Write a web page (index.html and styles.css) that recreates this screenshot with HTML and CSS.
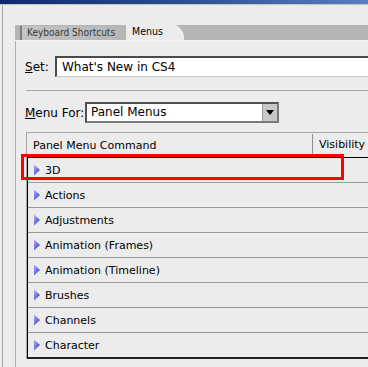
FILE: index.html
```html
<!DOCTYPE html>
<html lang="en">
<head>
    <meta charset="UTF-8">
    <title>Keyboard Shortcuts and Menus</title>
    <link rel="stylesheet" href="styles.css">
</head>
<body>
    <div class="titlebar"></div>
    <div class="window">
        <div class="tabs">
            <div class="tab">Keyboard Shortcuts</div>
            <div class="tab active">Menus</div>
        </div>
        <div class="panel">
            <div class="field-row set-row">
                <span class="label"><u>S</u>et:</span>
                <div class="textbox">What's New in CS4</div>
            </div>
            <div class="divider"></div>
            <div class="field-row menu-row">
                <span class="label"><u>M</u>enu For:</span>
                <div class="select">
                    <span class="select-value">Panel Menus</span>
                    <span class="select-button"><span class="arrow"></span></span>
                </div>
            </div>
            <div class="table">
                <div class="table-head">
                    <div class="col-command">Panel Menu Command</div>
                    <div class="col-visibility">Visibility</div>
                </div>
                <div class="table-body">
                    <div class="row highlighted"><span class="twisty"></span>3D</div>
                    <div class="row"><span class="twisty"></span>Actions</div>
                    <div class="row"><span class="twisty"></span>Adjustments</div>
                    <div class="row"><span class="twisty"></span>Animation (Frames)</div>
                    <div class="row"><span class="twisty"></span>Animation (Timeline)</div>
                    <div class="row"><span class="twisty"></span>Brushes</div>
                    <div class="row"><span class="twisty"></span>Channels</div>
                    <div class="row"><span class="twisty"></span>Character</div>
                </div>
            </div>
        </div>
    </div>
</body>
</html>
```

FILE: styles.css
```css
* {
    margin: 0;
    padding: 0;
    box-sizing: border-box;
}

body {
    background: #ececec;
    font-family: Tahoma, 'DejaVu Sans', sans-serif;
    font-size: 11px;
    color: #000;
    width: 368px;
    height: 367px;
    overflow: hidden;
}

/* barra azul da janela */
.titlebar {
    height: 5px;
    background: linear-gradient(90deg, #0a2a6e, #2a4f96 50%, #5a7fbf);
    border-bottom: 1px solid #c4c4c4;
}

.window {
    margin-left: 2px;
    border-left: 1px solid #a8a8a8;
    padding-left: 12px;
    padding-top: 20px;
    height: 362px;
}

/* abas */
.tabs {
    display: flex;
    align-items: flex-end;
    height: 16px;
    background: #b4b4b4;
    border-bottom: 1px solid #f4f4f4;
    font-family: 'DejaVu Sans Condensed', 'DejaVu Sans', sans-serif;
    font-stretch: condensed;
    font-size: 10px;
    white-space: nowrap;
}

.tab {
    height: 14px;
    line-height: 13px;
    padding-left: 5px;
    color: #3a3a3a;
    border-left: 2px solid #7c7c7c;
    margin-left: 5px;
    width: 106px;
    overflow: hidden;
    background: linear-gradient(90deg, #c4c4c4, #b6b6b6);
    clip-path: polygon(0 0, 93% 0, 100% 100%, 0 100%);
}

.tab.active {
    height: 16px;
    line-height: 15px;
    background: #ececec;
    color: #000;
    border-left: none;
    margin-left: 0;
    width: 58px;
    padding-left: 6px;
    font-size: 10.5px;
    border-radius: 2px 14px 0 0;
    clip-path: none;
}

/* área do painel */
.panel {
    border-left: 1px solid #b0b0b0;
    padding-left: 9px;
    height: 330px;
}

.field-row {
    display: flex;
    align-items: center;
    font-size: 12px;
}

.set-row {
    padding-top: 15px;
}

.label {
    width: 30px;
}

.menu-row .label {
    width: 60px;
}

.textbox {
    flex: 1;
    height: 21px;
    line-height: 18px;
    background: #fff;
    border-top: 2px solid #4a4a4a;
    border-left: 2px solid #4a4a4a;
    border-bottom: 1px solid #c8c8c8;
    padding-left: 5px;
    margin-right: -10px;
}

.divider {
    height: 1px;
    background: #a8a8a8;
    margin: 13px 0 0 1px;
}

.menu-row {
    padding-top: 11px;
}

.select {
    display: flex;
    width: 194px;
    height: 21px;
    background: #fff;
    border: 2px solid #505050;
    border-right-color: #7a7a7a;
    border-bottom-color: #7a7a7a;
}

.select-value {
    flex: 1;
    line-height: 17px;
    padding-left: 4px;
}

.select-button {
    width: 15px;
    background: #c8c8c8;
    border-left: 1px solid #9a9a9a;
    display: flex;
    align-items: center;
    justify-content: center;
}

.arrow {
    width: 0;
    height: 0;
    border-left: 4px solid transparent;
    border-right: 4px solid transparent;
    border-top: 5px solid #000;
}

/* tabela de comandos */
.table {
    margin: 9px -10px 0 1px;
    border-top: 1px solid #a8a8a8;
    border-left: 1px solid #a8a8a8;
}

.table-head {
    display: flex;
    height: 25px;
    border-bottom: 1px solid #000;
    white-space: nowrap;
}

.col-command {
    width: 286px;
    padding: 5px 0 0 6px;
    margin-top: 1px;
    border-right: 1px solid #909090;
}

.col-visibility {
    padding: 5px 0 0 6px;
}

.table-body {
    border-left: 1px solid #000;
    border-bottom: 2px solid #202020;
}

.row {
    position: relative;
    display: flex;
    align-items: center;
    height: 25px;
    border-bottom: 1px solid #9a9a9a;
    padding-left: 6px;
}

.row:last-child {
    height: 24px;
    border-bottom: none;
}

/* triângulo de expandir */
.twisty {
    width: 6px;
    height: 11px;
    margin-right: 5px;
    background: linear-gradient(120deg, #b0b0ff, #6866d8 55%, #2e2c90);
    clip-path: polygon(0 0, 100% 50%, 0 100%);
}

/* destaque vermelho sobre a linha 3D */
.row.highlighted::after {
    content: '';
    box-sizing: border-box;
    position: absolute;
    left: -7px;
    top: -4px;
    width: 323px;
    height: 26px;
    border: 3px solid #ff0000;
}
```
